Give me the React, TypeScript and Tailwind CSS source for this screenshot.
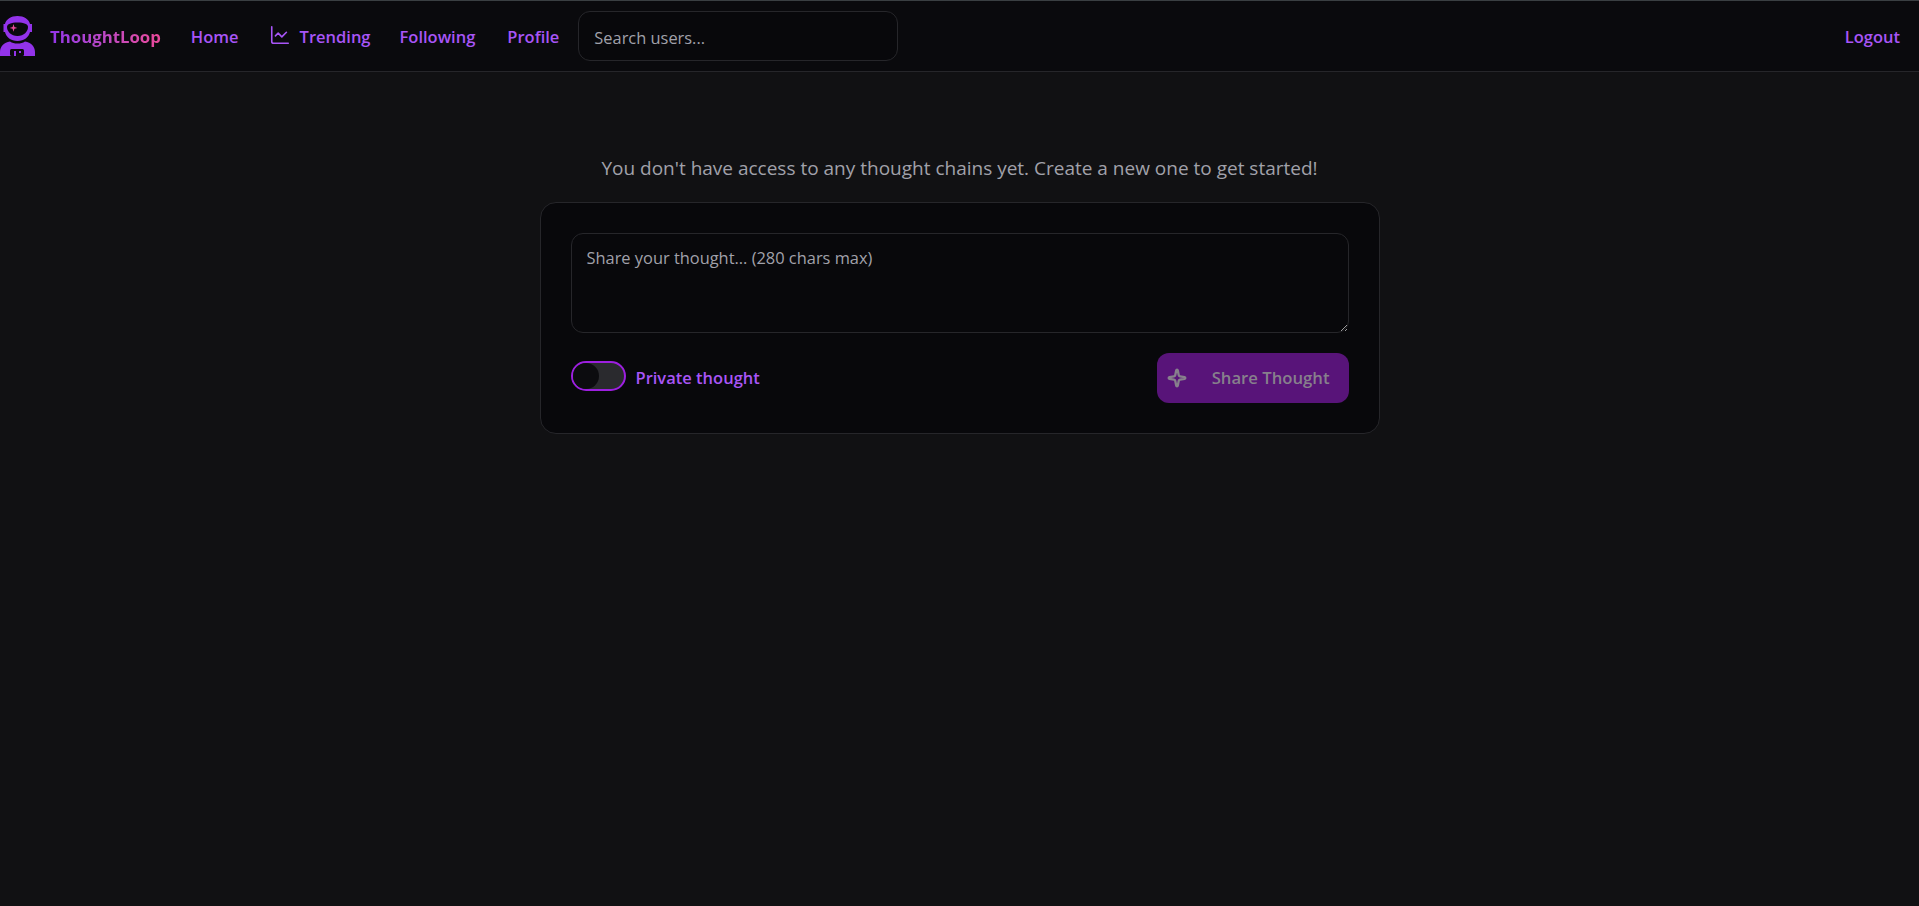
import React from 'react';
import { ChartLine, Sparkle } from 'lucide-react';

const font = "font-['Open_Sans','Noto_Sans',sans-serif]";

const LogoIcon: React.FC = () => (
  <svg width="36" height="40" viewBox="0 0 36 40" className="shrink-0">
    {/* helmet */}
    <path d="M17.500 0c6.500 0 11.500 3.500 12.500 8h2v8h-2c-1 5-6 9-12.500 9S6 21 5 16H3.500V8H5C6 3.500 11 0 17.500 0z" fill="#9333ea" />
    <path d="M7 11c0-3 4-4.500 10.500-4.500S28 8 28 11c0 4.500-4 9-10.500 9S7 15.500 7 11z" fill="#0a0a0d" />
    <path d="M13.500 8l.9 3 3 .9-3 .9-.9 3-.9-3-3-.9 3-.9z" fill="#ec4899" />
    {/* body */}
    <path d="M0 40v-4c0-5.500 4-9.500 10-10.500 2 1.500 4.500 2 7.500 2s5.500-.5 7.500-2c6 1 10 5 10 10.500v4z" fill="#9333ea" />
    <rect x="10" y="33" width="14" height="7" rx="1.500" fill="#0a0a0d" />
    <rect x="14" y="35" width="2" height="5" fill="#9333ea" />
    <rect x="19" y="35" width="2" height="2" fill="#9333ea" />
  </svg>
);

const NavLink: React.FC<{ children: React.ReactNode; className?: string }> = ({ children, className }) => (
  <a className={`flex items-center pt-[2px] text-[16.5px] font-semibold text-[#a855f7] ${className || ''}`}>{children}</a>
);

const App: React.FC = () => {
  return (
    <div className={`min-h-[906px] bg-[#111113] ${font}`}>
      <nav className="flex h-[72px] items-center justify-between border-t border-b border-t-[#3a3f42] border-b-[#26262a] bg-[#0a0a0d] pr-[19px]">
        <div className="flex items-center">
          <div className="flex items-center gap-[14px]">
            <LogoIcon />
            <span className="bg-gradient-to-r from-[#9333ea] to-[#ec4899] bg-clip-text pt-[2px] text-[16.800px] font-bold text-transparent">
              ThoughtLoop
            </span>
          </div>
          <div className="ml-[30px] flex items-center gap-[30px]">
            <NavLink>Home</NavLink>
            <NavLink className="-mr-[1px] gap-[9px]">
              <ChartLine size={22} strokeWidth={1.75} className="-mt-[5px]" />
              Trending
            </NavLink>
            <NavLink className="mr-[2px]">Following</NavLink>
            <NavLink>Profile</NavLink>
          </div>
          <input
            placeholder="Search users..."
            className="ml-[19px] h-[50px] w-[320px] rounded-xl border border-[#26262a] bg-[#08080b] px-[15px] pt-[2px] text-[16.400px] text-gray-300 outline-none placeholder:text-[#a1a1aa]"
          />
        </div>
        <NavLink>Logout</NavLink>
      </nav>

      <main className="flex flex-col items-center pt-[82px]">
        <p className="text-[19px] leading-[28px] text-[#a1a1aa]">
          You don't have access to any thought chains yet. Create a new one to get started!
        </p>
        <div className="mt-[20px] w-[840px] rounded-2xl border border-[#26262a] bg-[#08080b] p-[30px]">
          <textarea
            placeholder="Share your thought... (280 chars max)"
            className="block h-[100px] w-full rounded-xl border border-[#26262a] bg-[#08080b] px-[15px] py-[12px] text-[16.400px] text-gray-300 outline-none placeholder:text-[#a1a1aa]"
          />
          <div className="mt-[20px] flex items-center justify-between">
            <label className="flex items-center gap-[10px]">
              <span className="relative mb-[4px] block h-[30px] w-[55px] rounded-full border-2 border-[#9d1fe0] bg-[#2a2a2e]">
                <span className="absolute left-0 top-0 h-[26px] w-[26px] rounded-full bg-[#0c0c0f]" />
              </span>
              <span className="text-[16.500px] font-semibold text-[#a855f7]">Private thought</span>
            </label>
            <button className="flex h-[50px] w-[192px] items-center justify-between rounded-xl bg-[#581479] pl-[10px] pr-[19px] text-[16.700px] font-semibold text-[#87808c]">
              <Sparkle size={20} strokeWidth={2.75} />
              Share Thought
            </button>
          </div>
        </div>
      </main>
    </div>
  );
};

export default App;
